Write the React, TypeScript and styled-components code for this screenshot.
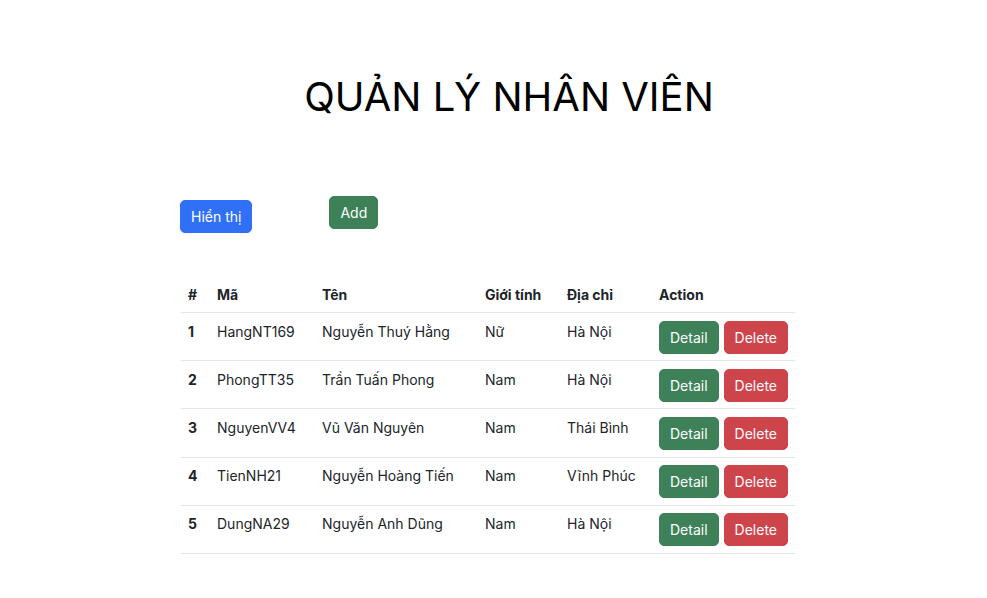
import React from "react";
import styled, { createGlobalStyle } from "styled-components";

const GlobalStyle = createGlobalStyle`
  html, body { margin: 0; padding: 0; background: #ffffff; }
  body {
    font-family: Inter, "Noto Sans", "Liberation Sans", sans-serif;
    color: #212529;
    font-size: 14px;
    line-height: 1.5;
  }
  *, *::before, *::after { box-sizing: border-box; }
`;

const Page = styled.div`
  display: flex;
  flex-direction: column;
  width: 987px;
`;

const Title = styled.h1`
  margin: 73px 0 0;
  padding-left: 31px;
  text-align: center;
  font-size: 40px;
  font-weight: 400;
  line-height: 48px;
  color: #000;
`;

const Content = styled.div`
  display: flex;
  flex-direction: column;
  margin-left: 181px;
  width: 614px;
`;

const Toolbar = styled.div`
  display: flex;
  align-items: flex-start;
  gap: 77px;
  margin-top: 75px;
  margin-left: -1px;
`;

const variants = {
  primary: "#3070f6",
  success: "#3e8158",
  danger: "#cd444b",
} as const;

const Button = styled.button<{ $variant: keyof typeof variants; $offset?: number }>`
  font-family: inherit;
  font-size: 14px;
  line-height: 21px;
  height: 33px;
  padding: 5px 10px;
  border: 1px solid ${(p) => variants[p.$variant]};
  border-radius: 5px;
  background: ${(p) => variants[p.$variant]};
  color: #fff;
  margin-top: ${(p) => p.$offset ?? 0}px;
  cursor: pointer;
`;

const Table = styled.table`
  margin-top: 44px;
  width: 614px;
  border-collapse: collapse;
  table-layout: fixed;
`;

const Th = styled.th<{ $w: number }>`
  width: ${(p) => p.$w}px;
  text-align: left;
  font-weight: 700;
  padding: 7px 8px 7px 7px;
  border-bottom: 1px solid #e3e5e8;
  vertical-align: bottom;
`;

const Td = styled.td<{ $bold?: boolean }>`
  padding: 7.6px 8px 6.6px 7px;
  font-weight: ${(p) => (p.$bold ? 700 : 400)};
  border-bottom: 1px solid #e3e5e8;
  vertical-align: top;
`;

const Actions = styled.div`
  display: flex;
  gap: 5px;
`;

const employees = [
  { code: "HangNT169", name: "Nguyễn Thuý Hằng", gender: "Nữ", address: "Hà Nội" },
  { code: "PhongTT35", name: "Trần Tuấn Phong", gender: "Nam", address: "Hà Nội" },
  { code: "NguyenVV4", name: "Vũ Văn Nguyên", gender: "Nam", address: "Thái Bình" },
  { code: "TienNH21", name: "Nguyễn Hoàng Tiến", gender: "Nam", address: "Vĩnh Phúc" },
  { code: "DungNA29", name: "Nguyễn Anh Dũng", gender: "Nam", address: "Hà Nội" },
];

export default function App() {
  return (
    <>
      <GlobalStyle />
      <Page>
        <Title>QUẢN LÝ NHÂN VIÊN</Title>
        <Content>
          <Toolbar>
            <Button $variant="primary" $offset={4}>Hiển thị</Button>
            <Button $variant="success">Add</Button>
          </Toolbar>
          <Table>
            <thead>
              <tr>
                <Th $w={29}>#</Th>
                <Th $w={105}>Mã</Th>
                <Th $w={163}>Tên</Th>
                <Th $w={82}>Giới tính</Th>
                <Th $w={92}>Địa chỉ</Th>
                <Th $w={143}>Action</Th>
              </tr>
            </thead>
            <tbody>
              {employees.map((e, i) => (
                <tr key={e.code}>
                  <Td $bold>{i + 1}</Td>
                  <Td>{e.code}</Td>
                  <Td>{e.name}</Td>
                  <Td>{e.gender}</Td>
                  <Td>{e.address}</Td>
                  <Td>
                    <Actions>
                      <Button $variant="success">Detail</Button>
                      <Button $variant="danger">Delete</Button>
                    </Actions>
                  </Td>
                </tr>
              ))}
            </tbody>
          </Table>
        </Content>
      </Page>
    </>
  );
}
